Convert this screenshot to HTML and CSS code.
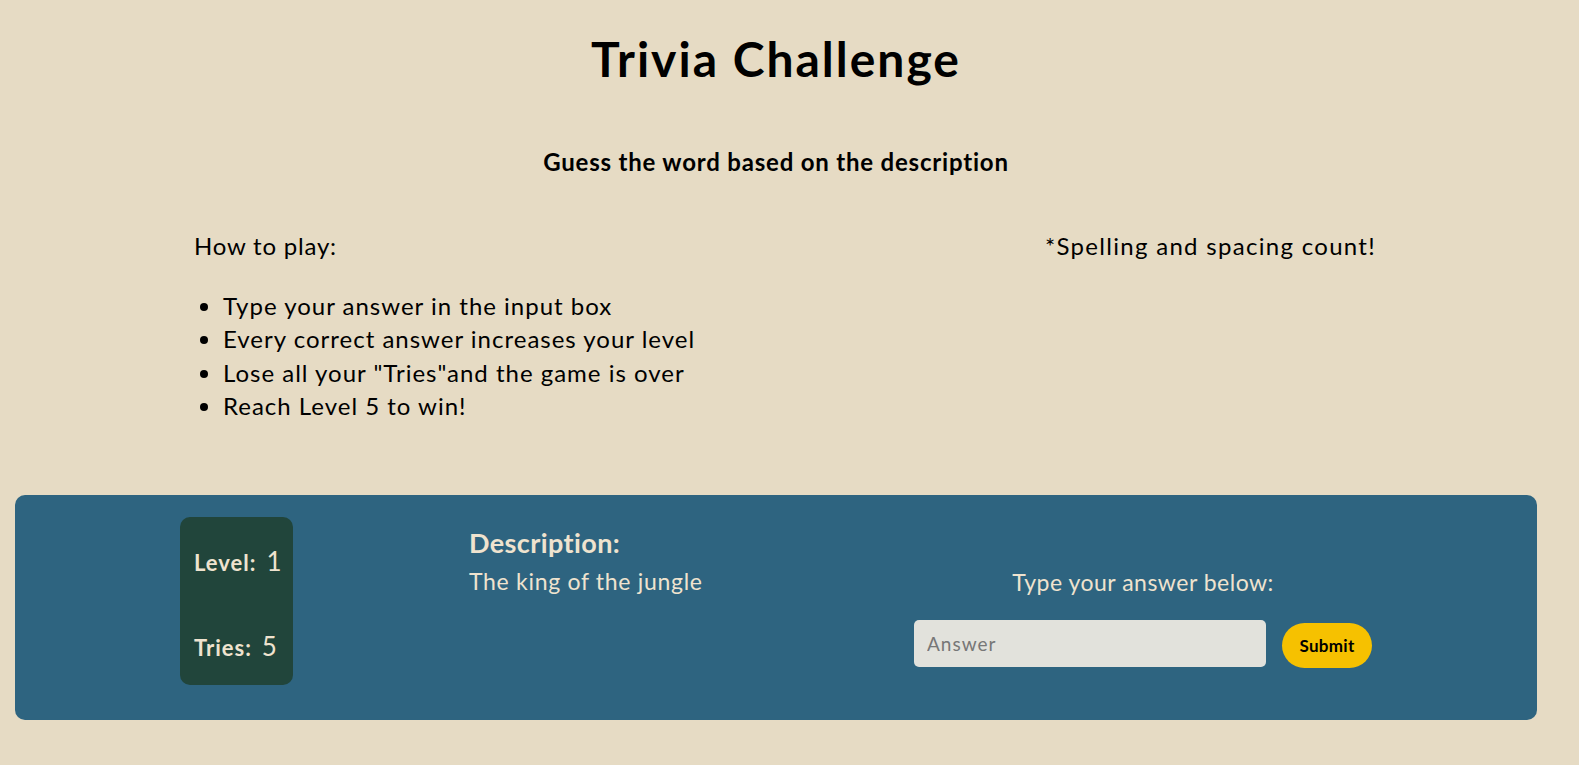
FILE: index.html
```html
<!DOCTYPE html>
<html lang="en">
<head>
<meta charset="utf-8">
<title>Trivia Challenge</title>
<link rel="stylesheet" href="styles.css">
</head>
<body>
  <header class="head">
    <h1 class="title">Trivia Challenge</h1>
    <h2 class="subtitle">Guess the word based on the description</h2>
  </header>
  <section class="rules">
    <div class="how">
      <p class="how-label">How to play:</p>
      <ul class="how-list">
        <li>Type your answer in the input box</li>
        <li>Every correct answer increases your level</li>
        <li>Lose all your "Tries"and the game is over</li>
        <li>Reach Level 5 to win!</li>
      </ul>
    </div>
    <p class="note">*Spelling and spacing count!</p>
  </section>
  <section class="panel">
    <div class="stats">
      <div class="stat"><span class="stat-label">Level:</span><span class="stat-value">1</span></div>
      <div class="stat"><span class="stat-label">Tries:</span><span class="stat-value">5</span></div>
    </div>
    <div class="desc">
      <h3 class="desc-title">Description:</h3>
      <p class="desc-text">The king of the jungle</p>
    </div>
    <div class="answer">
      <p class="answer-label">Type your answer below:</p>
      <div class="answer-row">
        <input class="answer-input" type="text" placeholder="Answer">
        <button class="submit" type="button">Submit</button>
      </div>
    </div>
  </section>
</body>
</html>
```

FILE: styles.css
```css
* { box-sizing: border-box; }
body {
  margin: 0 42px 0 15px;
  background: #e6dbc4;
  font-family: Lato, "Open Sans", sans-serif;
  color: #000;
}
.head { text-align: center; }
.title {
  margin: 0;
  padding-top: 30px;
  font-size: 48px;
  line-height: 58px;
  font-weight: 700;
  letter-spacing: 2px;
}
.subtitle {
  margin: 0;
  padding-top: 59px;
  font-size: 24px;
  line-height: 30px;
  font-weight: 700;
  letter-spacing: 0.8px;
}
.rules {
  display: flex;
  justify-content: space-between;
  padding: 0 161px 0 179px;
  margin-top: 52px;
  font-size: 24px;
  line-height: 33.5px;
  letter-spacing: 1px;
}
.how-label { margin: 0; letter-spacing: 0.8px; }
.how-list {
  margin: 26px 0 0 0;
  padding-left: 29px;
}
.note { margin: 0; letter-spacing: 1.3px; }
.panel {
  display: flex;
  align-items: flex-start;
  margin-top: 72px;
  height: 225px;
  padding: 22px 165px 0;
  background: #2e6480;
  border-radius: 10px;
  color: #efe3cf;
}
.stats {
  width: 113px;
  height: 168px;
  background: #21453b;
  border-radius: 10px;
  display: flex;
  flex-direction: column;
  justify-content: space-between;
  padding: 28px 0 23px 14px;
}
.stat { display: flex; align-items: baseline; gap: 10px; }
.stat-label { font-size: 22px; font-weight: 700; letter-spacing: 1px; }
.stat-value { font-size: 26px; }
.desc { margin-left: 176px; }
.desc-title {
  margin: 10px 0 0;
  font-size: 27px;
  line-height: 32px;
  font-weight: 700;
  letter-spacing: 0.4px;
}
.desc-text {
  margin: 8px 0 0;
  font-size: 23px;
  line-height: 28px;
  letter-spacing: 0.7px;
}
.answer {
  margin-left: auto;
  width: 458px;
  text-align: center;
}
.answer-label {
  margin: 51px 0 0;
  font-size: 23px;
  line-height: 28px;
  letter-spacing: 0.5px;
}
.answer-row {
  display: flex;
  align-items: flex-start;
  gap: 16px;
  margin-top: 24px;
}
.answer-input {
  width: 352px;
  height: 47px;
  border: none;
  border-radius: 5px;
  background: #e2e2dc;
  padding: 0 13px;
  font-family: inherit;
  font-size: 19px;
  letter-spacing: 1px;
}
.answer-input::placeholder { color: #777; }
.submit {
  width: 90px;
  height: 45px;
  margin-top: 3px;
  border: none;
  border-radius: 23px;
  background: #f6c100;
  color: #000;
  font-family: inherit;
  font-size: 17px;
  font-weight: 700;
  letter-spacing: 0.3px;
}
```
